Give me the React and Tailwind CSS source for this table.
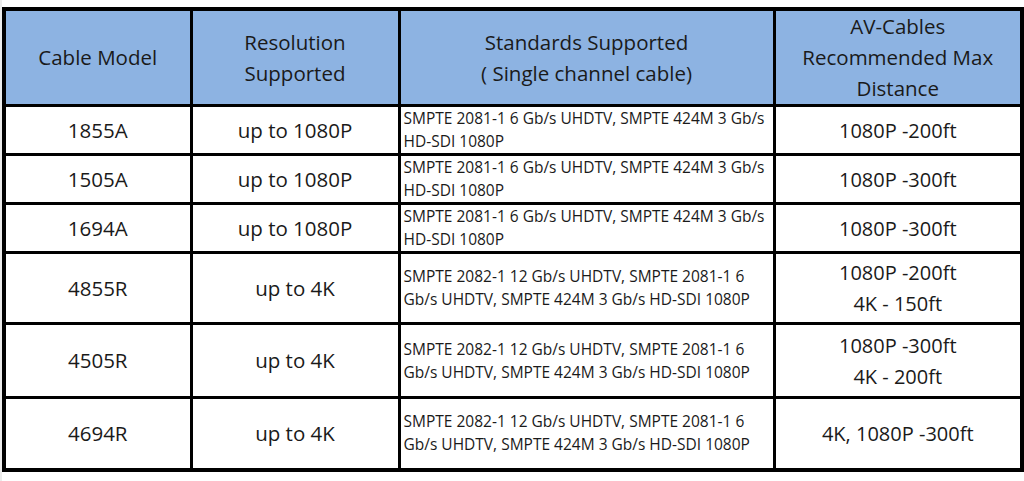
import React from "react";

const rows = [
  { m: "1855A", r: "up to 1080P", s: ["SMPTE 2081-1 6 Gb/s UHDTV, SMPTE 424M 3 Gb/s", "HD-SDI 1080P"], d: ["1080P -200ft"], h: "h-[45px]", top: true },
  { m: "1505A", r: "up to 1080P", s: ["SMPTE 2081-1 6 Gb/s UHDTV, SMPTE 424M 3 Gb/s", "HD-SDI 1080P"], d: ["1080P -300ft"], h: "h-[45px]", top: true },
  { m: "1694A", r: "up to 1080P", s: ["SMPTE 2081-1 6 Gb/s UHDTV, SMPTE 424M 3 Gb/s", "HD-SDI 1080P"], d: ["1080P -300ft"], h: "h-[45px]", top: true },
  { m: "4855R", r: "up to 4K", s: ["SMPTE 2082-1 12 Gb/s UHDTV, SMPTE 2081-1 6", "Gb/s UHDTV, SMPTE 424M 3 Gb/s HD-SDI 1080P"], d: ["1080P -200ft", "4K - 150ft"], h: "h-[71px]" },
  { m: "4505R", r: "up to 4K", s: ["SMPTE 2082-1 12 Gb/s UHDTV, SMPTE 2081-1 6", "Gb/s UHDTV, SMPTE 424M 3 Gb/s HD-SDI 1080P"], d: ["1080P -300ft", "4K - 200ft"], h: "h-[74px]" },
  { m: "4694R", r: "up to 4K", s: ["SMPTE 2082-1 12 Gb/s UHDTV, SMPTE 2081-1 6", "Gb/s UHDTV, SMPTE 424M 3 Gb/s HD-SDI 1080P"], d: ["4K, 1080P -300ft"], h: "h-[72px]" },
];

export default function App() {
  return (
    <div className="w-[1024px] h-[481px] bg-white flex" style={{ fontFamily: "'Open Sans', 'Noto Sans', sans-serif" }}>
      <div className="w-[4px] bg-[#ececec]" />
      <div className="pt-[7px]">
        <table className="border-collapse border-[4px] border-black table-fixed text-[#1a1a1a] w-[1018px]">
          <colgroup>
            <col className="w-[187px]" />
            <col className="w-[208px]" />
            <col className="w-[375px]" />
            <col className="w-[248px]" />
          </colgroup>
          <thead>
            <tr className="h-[94px] bg-[#8db3e2] text-[20.5px] leading-[31px]">
              <th className="border-[3px] border-black font-normal text-center whitespace-nowrap">Cable Model</th>
              <th className="border-[3px] border-black font-normal text-center whitespace-nowrap">Resolution<br />Supported</th>
              <th className="border-[3px] border-black font-normal text-center whitespace-nowrap">Standards Supported<br />( Single channel cable)</th>
              <th className="border-[3px] border-black font-normal text-center whitespace-nowrap">AV-Cables<br />Recommended Max<br />Distance</th>
            </tr>
          </thead>
          <tbody>
            {rows.map((row) => (
              <tr key={row.m} className={row.h}>
                <td className="border-[3px] border-black text-center text-[20.5px]">{row.m}</td>
                <td className="border-[3px] border-black text-center text-[20.5px]">{row.r}</td>
                <td className={`border-[3px] border-black text-left text-[15.5px] leading-[23px] pl-[3px] whitespace-nowrap ${row.top ? "align-top" : "align-middle"}`}>
                  {row.s[0]}<br />{row.s[1]}
                </td>
                <td className="border-[3px] border-black text-center text-[20px] leading-[31px]">
                  {row.d.map((x, i) => (
                    <div key={i}>{x}</div>
                  ))}
                </td>
              </tr>
            ))}
          </tbody>
        </table>
      </div>
    </div>
  );
}
